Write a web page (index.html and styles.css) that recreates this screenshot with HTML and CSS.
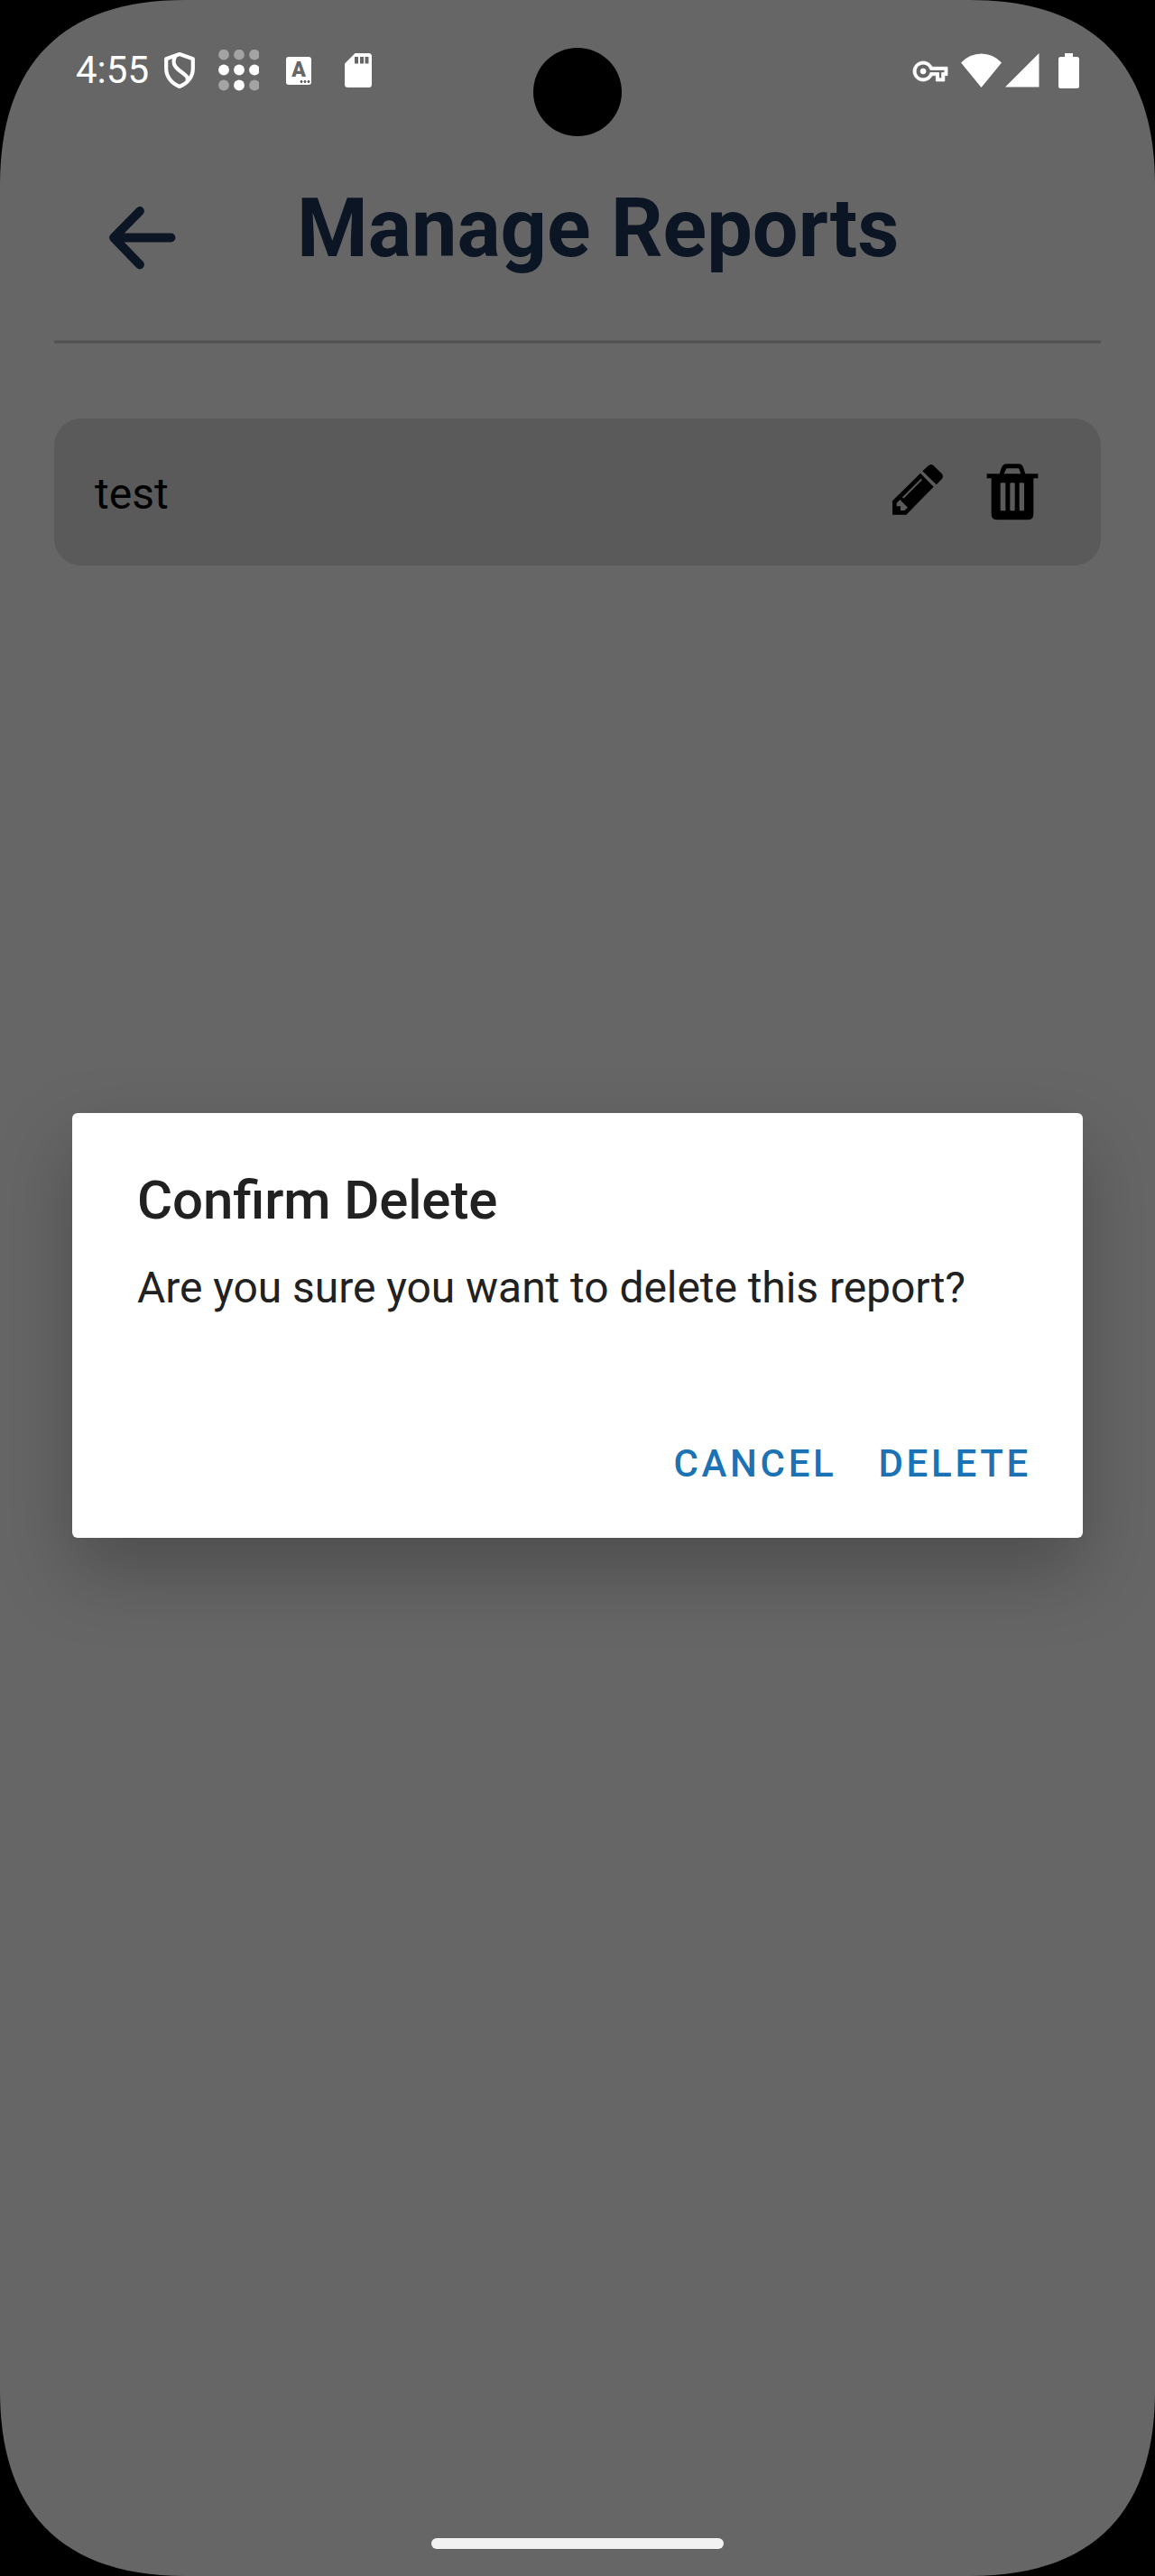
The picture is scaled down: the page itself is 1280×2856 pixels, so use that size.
FILE: index.html
```html
<!DOCTYPE html>
<html lang="en">
<head>
<meta charset="utf-8">
<title>Manage Reports</title>
<link rel="stylesheet" href="styles.css">
</head>
<body>
<div class="screen">
  <header class="status">
    <span class="clock">4:55</span>
    <svg class="i-shield" width="36" height="42" viewBox="0 0 36 42" fill="none" stroke="#fff" stroke-width="4.2" stroke-linejoin="round"><path d="M18 3L3.200 8.200V19C3.200 28 9 35.500 18 39C27 35.500 32.800 28 32.800 19V8.200Z"/><path d="M13.500 5C9.500 12 12 16.500 17 20.500C23 25.500 28.500 27.500 26.500 33"/></svg>
    <svg class="i-dots" width="45" height="46" viewBox="0 0 45 46" fill="#fff"><g opacity=".4"><circle cx="6" cy="5.700" r="5.900"/><circle cx="23" cy="5.700" r="5.900"/><circle cx="40" cy="5.700" r="5.900"/><circle cx="6" cy="39.500" r="5.900"/><circle cx="40" cy="39.500" r="5.900"/></g><circle cx="6" cy="22.500" r="5.900"/><circle cx="23" cy="22.500" r="5.900"/><circle cx="40" cy="22.500" r="5.900"/><circle cx="23" cy="39.500" r="5.900"/></svg>
    <span class="i-lang"><b>A</b><i></i></span>
    <svg class="i-sd" width="30" height="38" viewBox="0 0 30 38"><path fill="#fff" d="M11.500 0H26.500Q30 0 30 3.500V34.500Q30 38 26.500 38H3.500Q0 38 0 34.500V11.500Z"/><path fill="#666" d="M11 4h4v7.500h-4zM17 4h4v7.500h-4zM22.500 4h4v7.500h-4z"/></svg>
    <span class="grow"></span>
    <svg class="i-key" width="38" height="22" viewBox="0 5 24 14" preserveAspectRatio="none" fill="#fff" stroke="#fff" stroke-width=".5"><path d="M22 19h-6v-4h-2.680c-1.140 2.420-3.600 4-6.320 4-3.860 0-7-3.140-7-7s3.140-7 7-7c2.720 0 5.170 1.580 6.320 4H24v6h-2v4zm-4-2h2v-4h2v-2H11.940l-.23-.67C11.010 8.340 9.110 7 7 7c-2.760 0-5 2.240-5 5s2.240 5 5 5c2.110 0 4.010-1.340 4.710-3.330l.23-.67H18v4z"/><circle cx="7" cy="12" r="1.900"/></svg>
    <svg class="i-wifi" width="45" height="38" viewBox="0 0 45 38" fill="#fff"><path d="M0 10.500Q9.500 .500 22.500 .500T45 10.500L22.500 38Z"/></svg>
    <svg class="i-signal" width="38" height="38" viewBox="0 0 38 38" fill="#fff"><path d="M37.500 0V37.500H0Z"/></svg>
    <svg class="i-batt" width="23" height="39" viewBox="0 0 23 39" fill="#fff"><path d="M7 0H16V4H20.500Q23 4 23 6.500V36.500Q23 39 20.500 39H2.500Q0 39 0 36.500V6.500Q0 4 2.500 4H7Z"/></svg>
  </header>

  <div class="topbar">
    <svg class="back" width="74" height="70" viewBox="0 0 74 70" fill="none" stroke="#0b1523" stroke-width="9.800" stroke-linecap="round" stroke-linejoin="round"><path d="M34 5L5 34.500L34 64.500M5 34.500H68.500"/></svg>
    <h1>Manage Reports</h1>
  </div>

  <main class="list">
    <div class="report">
      <span class="name">test</span>
      <svg width="58" height="58" viewBox="144 222 174 174"><path d="M240 254L284 299L193 392H147V346ZM247 247L265 230Q274 220 284 229L310 254Q319 264 311 274L293 292Z"/><path fill="#5a5a5a" d="M172 342L198 368L187 378H174V364H161V353ZM180 334L242 272L246 276L184 338Z"/></svg>
      <svg class="trash" width="58" height="63" viewBox="460 221 174 189"><path d="M462 255H504L511 234Q516 222 527 222H568Q579 222 583 234L590 255H632V270H617V388Q617 408 597 408H497Q477 408 477 388V270H462Z"/><path fill="#5a5a5a" d="M519 255L525 241Q526 237 530 237H565Q569 237 570 241L575 255ZM507 288Q507 285 510 285H521Q524 285 524 288V375Q524 378 521 378H510Q507 378 507 375ZM539 288Q539 285 542 285H552Q555 285 555 288V375Q555 378 552 378H542Q539 378 539 375ZM570 288Q570 285 573 285H583Q586 285 586 288V375Q586 378 583 378H573Q570 378 570 375Z"/></svg>
    </div>
  </main>

  <div class="overlay">
    <section class="dialog" role="dialog">
      <h2>Confirm Delete</h2>
      <p>Are you sure you want to delete this report?</p>
      <div class="actions"><button>CANCEL</button><button>DELETE</button></div>
    </section>
  </div>
  <div class="camera"></div>
  <div class="navpill"></div>
</div>
</body>
</html>
```

FILE: styles.css
```css
* { box-sizing: border-box; }
body { margin: 0; background: #000; font-family: Roboto, "Noto Sans", sans-serif; }
h1, h2, p { margin: 0; }

.screen {
  position: relative;
  width: 1280px;
  height: 2856px;
  overflow: hidden;
  background: #666;
  display: flex;
  flex-direction: column;
  clip-path: path("M0 205C0 70 70 0 205 0H1075C1210 0 1280 70 1280 205V2651C1280 2786 1210 2856 1075 2856H205C70 2856 0 2786 0 2651Z");
}

.status { height: 156px; padding: 0 84px 0 84px; display: flex; align-items: center; color: #fff; }
.clock { width: 97px; font-size: 42px; line-height: 50px; }
.i-dots { margin-left: 25px; }
.i-lang {
  width: 28px; height: 31px; margin-left: 30px; border-radius: 3px; background: #fff; color: #666;
  display: flex; flex-direction: column; align-items: center;
}
.i-lang b { font-size: 23px; line-height: 28px; font-weight: 900; margin-top: 1px; }
.i-lang i { width: 12px; height: 3px; margin: -3px 1px 0 auto; background: radial-gradient(circle, #666 1.3px, transparent 1.7px) 0 0 / 4px 3px; }
.i-sd { margin-left: 37px; }
.grow { flex: 1; }
.i-key { margin-right: 15px; margin-top: 2px; overflow: visible; }
.i-wifi { margin-right: 4px; }
.i-signal { margin-right: 21px; }

.topbar {
  height: 224px; margin: 0 60px; padding: 73px 0 0 61px;
  display: flex; align-items: flex-start; gap: 134px;
  border-bottom: 2px solid #515151;
  box-shadow: 0 1px #5b5b5b, 0 -1px #666;
  background: linear-gradient(#5b5b5b, #5b5b5b) bottom / 100% 1px no-repeat;
}
.topbar h1 { font-size: 90px; line-height: 106px; font-weight: 700; color: #0b1523; margin-top: -28px; white-space: nowrap; }

.list { padding: 84px 60px 0; }
.report { height: 163px; padding: 0 69px 0 45px; border-radius: 30px; background: #5a5a5a; display: flex; align-items: center; }
.name { flex: 1; font-size: 48px; line-height: 56px; color: #000; padding-top: 4px; }
.report svg { margin-top: -6px; }
.report .trash { margin: 0 0 0 47px; }

.overlay { position: absolute; inset: 0; display: flex; align-items: flex-start; justify-content: center; padding-top: 1234px; }
.dialog {
  width: 1120px; height: 471px; padding: 61px 57px 0 72px; border-radius: 6px; background: #fff; color: #212121;
  box-shadow: 0 36px 84px rgba(0, 0, 0, .25);
}
.dialog h2 { font-size: 60px; line-height: 72px; font-weight: 500; letter-spacing: -.13px; white-space: nowrap; font-feature-settings: "liga" 1; }
.dialog p { font-size: 48px; line-height: 60px; margin-top: 31px; letter-spacing: -.06px; white-space: nowrap; }
.actions { display: flex; justify-content: flex-end; gap: 46px; margin-top: 140px; }
.actions button { border: 0; padding: 0; background: none; font: 500 42px/50px Roboto, sans-serif; letter-spacing: 3.7px; color: #1b72b5; }

.camera { position: absolute; left: 591px; top: 53px; width: 98px; height: 98px; border-radius: 50%; background: #000; }
.navpill { position: absolute; left: 478px; top: 2814px; width: 324px; height: 12px; border-radius: 6px; background: #f2f2f2; }
```
